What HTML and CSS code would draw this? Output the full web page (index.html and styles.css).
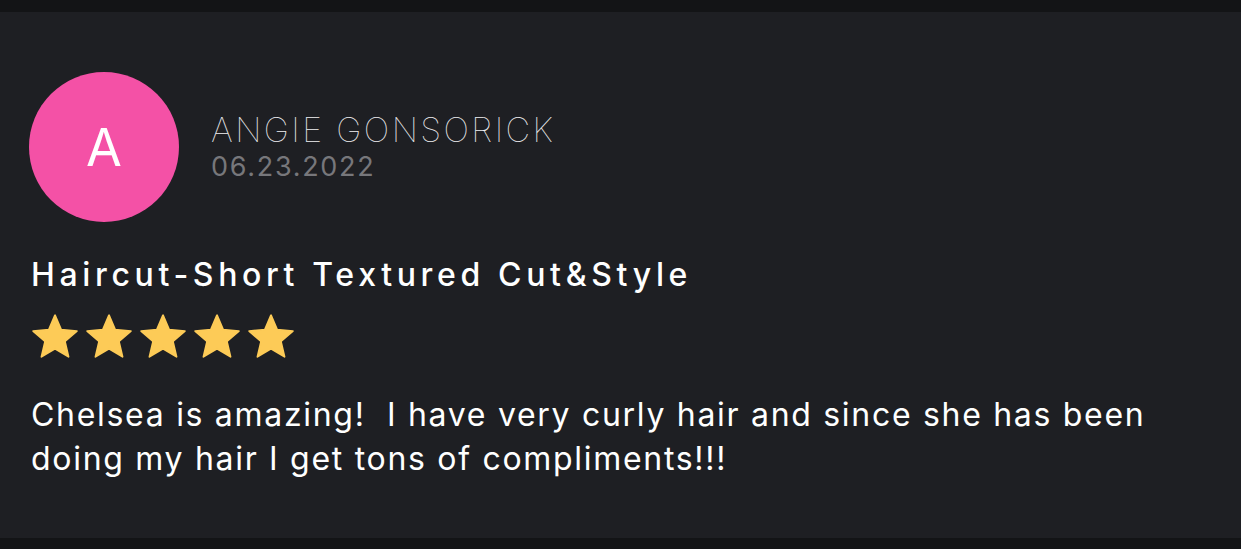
FILE: index.html
```html
<!DOCTYPE html>
<html lang="en">
<head>
<meta charset="utf-8">
<title>Review</title>
<link rel="stylesheet" href="styles.css">
</head>
<body>
<main class="page">
  <article class="review">
    <header class="review-head">
      <div class="avatar">A</div>
      <div class="author">
        <div class="author-name">ANGIE GONSORICK</div>
        <div class="author-date">06.23.2022</div>
      </div>
    </header>
    <h2 class="service">Haircut-Short Textured Cut&amp;Style</h2>
    <div class="stars" aria-label="5 out of 5 stars">
      <svg class="star" viewBox="1.5 1.5 21 20" width="46" height="44"><path d="M12 17.27L18.18 21l-1.64-7.03L22 9.24l-7.19-.61L12 2 9.19 8.63 2 9.24l5.46 4.73L5.82 21z"/></svg>
      <svg class="star" viewBox="1.5 1.5 21 20" width="46" height="44"><path d="M12 17.27L18.18 21l-1.64-7.03L22 9.24l-7.19-.61L12 2 9.19 8.63 2 9.24l5.46 4.73L5.82 21z"/></svg>
      <svg class="star" viewBox="1.5 1.5 21 20" width="46" height="44"><path d="M12 17.27L18.18 21l-1.64-7.03L22 9.24l-7.19-.61L12 2 9.19 8.63 2 9.24l5.46 4.73L5.82 21z"/></svg>
      <svg class="star" viewBox="1.5 1.5 21 20" width="46" height="44"><path d="M12 17.27L18.18 21l-1.64-7.03L22 9.24l-7.19-.61L12 2 9.19 8.63 2 9.24l5.46 4.73L5.82 21z"/></svg>
      <svg class="star" viewBox="1.5 1.5 21 20" width="46" height="44"><path d="M12 17.27L18.18 21l-1.64-7.03L22 9.24l-7.19-.61L12 2 9.19 8.63 2 9.24l5.46 4.73L5.82 21z"/></svg>
    </div>
    <p class="review-text">Chelsea is amazing!&nbsp; I have very curly hair and since she has been doing my hair I get tons of compliments!!!</p>
  </article>
</main>
</body>
</html>
```

FILE: styles.css
```css
html, body {
  margin: 0;
  padding: 0;
  background: #131416;
}

body {
  font-family: Inter, "Noto Sans", "Liberation Sans", sans-serif;
  color: #ffffff;
}

.page {
  height: 549px;
  padding: 12px 0 11px;
  box-sizing: border-box;
  display: flex;
}

.review {
  flex: 1;
  background: #1e1f23;
  padding: 60px 40px 0 29px;
  display: flex;
  flex-direction: column;
}

.review-head {
  display: flex;
  align-items: center;
  gap: 32px;
}

.avatar {
  width: 150px;
  height: 150px;
  border-radius: 50%;
  background: #f451a6;
  color: #ffffff;
  display: flex;
  align-items: center;
  justify-content: center;
  font-size: 52px;
  font-weight: 400;
  flex-shrink: 0;
}

.author {
  display: flex;
  flex-direction: column;
  gap: 2px;
}

.author-name {
  font-size: 34px;
  font-weight: 100;
  letter-spacing: 2.4px;
  line-height: 38px;
  color: #f0f0f2;
}

.author-date {
  font-size: 27px;
  font-weight: 400;
  letter-spacing: 1.7px;
  line-height: 32px;
  color: #77777b;
}

.service {
  margin: 33px 0 0 2px;
  font-size: 32px;
  font-weight: 500;
  letter-spacing: 4.65px;
  line-height: 40px;
  color: #ffffff;
}

.stars {
  display: flex;
  gap: 8px;
  margin: 19px 0 0 3px;
}

.star {
  display: block;
  fill: #fdcb57;
  stroke: #fdcb57;
  stroke-width: 0.8;
  stroke-linejoin: round;
}

.review-text {
  margin: 35px 0 0 2px;
  font-size: 32px;
  font-weight: 400;
  letter-spacing: 1.7px;
  line-height: 44px;
  max-width: 1170px;
  color: #ffffff;
}
```
